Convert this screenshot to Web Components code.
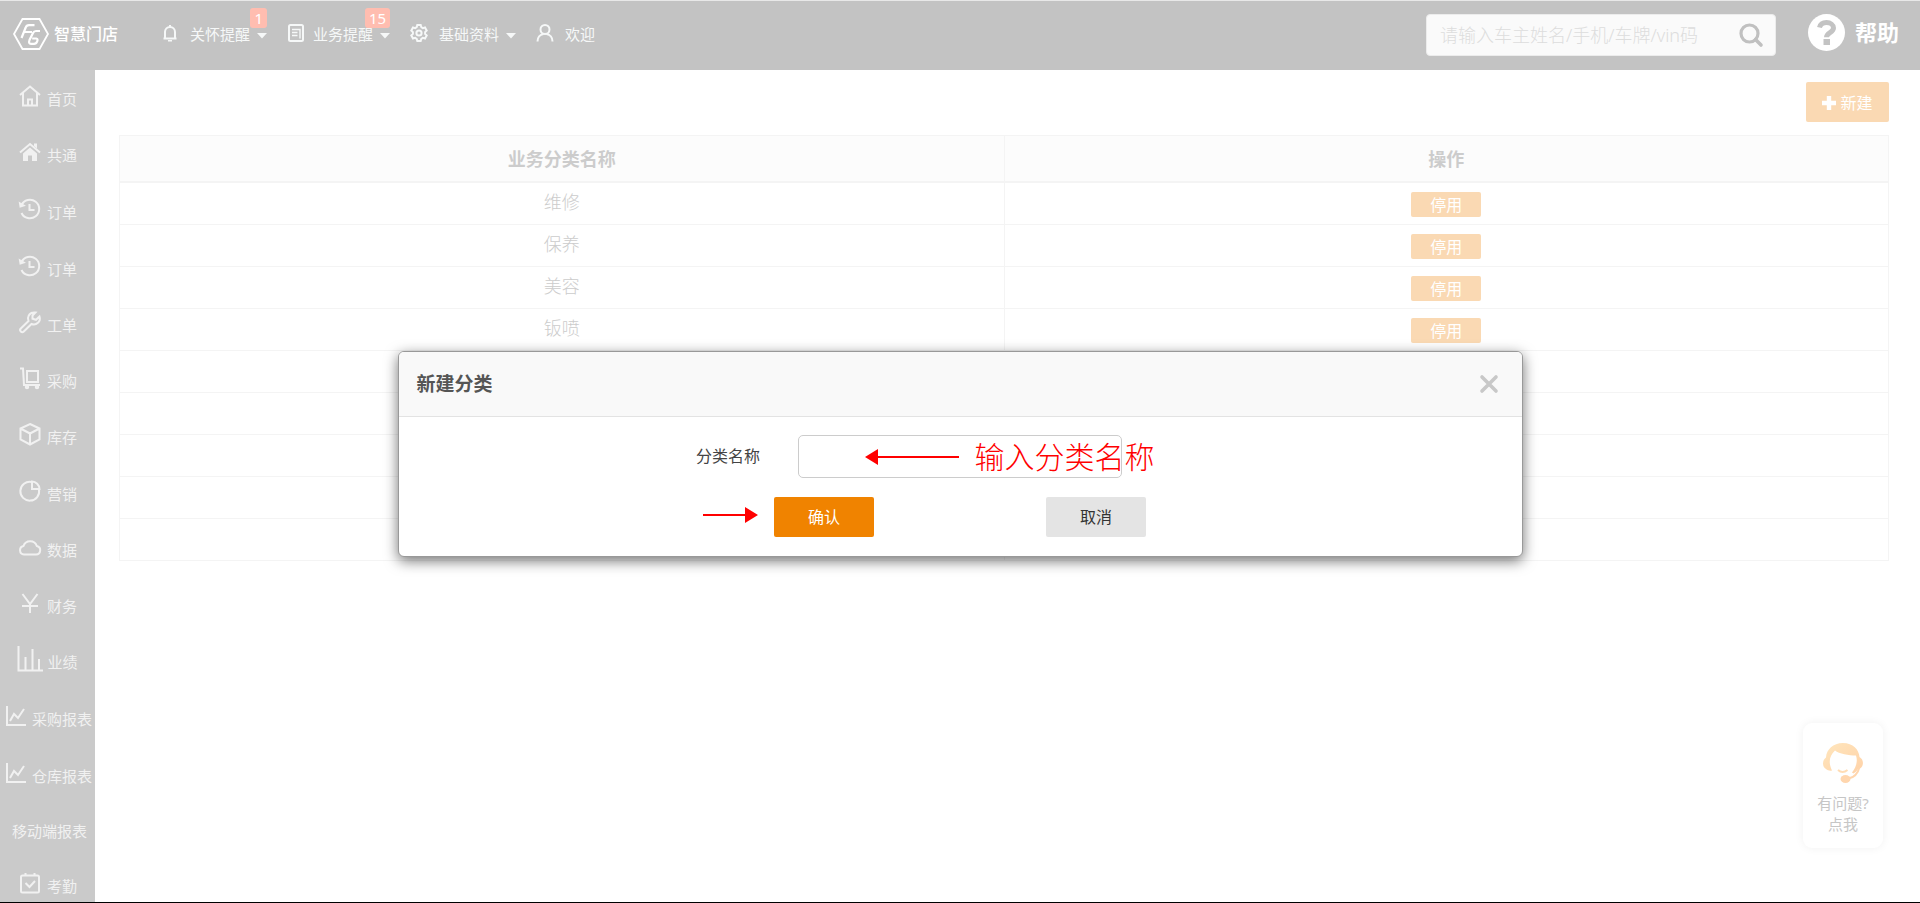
<!DOCTYPE html>
<html lang="zh-CN">
<head>
<meta charset="utf-8">
<title>智慧门店</title>
<style>
  html, body { margin: 0; height: 100%; }
  body {
    background: #fff;
    color: #ccc;
    font-family: "Noto Sans", "Noto Sans CJK SC", sans-serif;
    font-size: 16px;
  }
</style>
</head>
<body>
<store-app></store-app>
<script>
const ICONS = {
  home: ['0 0 22 22', '<path d="M1 10 11 1.500 21 10M4 8v12.500h14V8M9 20v-5.500h4V20"/>'],
  house: ['0 0 22 22', '<path d="M1 11.500 11 3l10 8.500" stroke-width="2"/><path d="M4 12.500 11 6.500l7 6V20h-5v-5.500H9V20H4z" fill="currentColor" stroke="none"/><path d="M15 2.500h3v5l-3-2.500z" fill="currentColor" stroke="none"/>'],
  history: ['0 0 22 22', '<path d="M2.500 7A9.300 9.300 0 1 1 2.500 15M10.500 6v6h5"/><path d="M1 5.500l.5 3 3-1z" fill="currentColor"/>'],
  wrench: ['0 0 22 22', '<path d="M14.500 1.500a6 6 0 0 0-5 8.500L1.800 17.500a1.800 1.800 0 0 0 3 3L12.500 13a6 6 0 0 0 8-7.500l-3.500 3.300-3.500-1V4.500l3-3a6 6 0 0 0-2 0z"/>'],
  cart: ['0 0 22 22', '<path d="M1 1.500h3L5 18h16M8 4h11v11H8z"/><circle cx="8" cy="20" r="1.200"/><circle cx="18" cy="20" r="1.200"/>'],
  box: ['0 0 22 22', '<path d="M11 1l9.500 4.500v11L11 21.500 1.500 16.500v-11zM1.500 5.500 11 10.500l9.500-5M11 10.500v11"/>'],
  pie: ['0 0 22 22', '<path d="M12.500 2A9.400 9.400 0 1 0 20 9.500"/><path d="M13 1.500V9h7.500A8 8 0 0 0 13 1.500z"/>'],
  cloud: ['0 0 22 22', '<path d="M5 18.500h12a4.300 4.300 0 0 0 .8-8.500 7 7 0 0 0-13.300 0A4.300 4.300 0 0 0 5 18.500z"/>'],
  yen: ['0 0 22 22', '<path d="M3.500 2 11 12l7.500-10M3 14h16M11 12v9"/>'],
  bars: ['0 0 26 26', '<path d="M1.500 0v24.500H26M8.500 24V11M15.500 24V3M22 24V13"/>'],
  trend: ['0 0 20 22', '<path d="M1 1v19h19M4 16l4-7 4 4 6-9"/>'],
  check: ['0 0 22 22', '<rect x="2" y="3.500" width="18" height="17" rx="1.500"/><path d="M6.500 1v3M15.500 1v3M6.500 11l4 4 5.500-6"/>'],
  bell: ['0 0 18 18', '<path d="M4 14.500V8a5 5 0 0 1 10 0v6.500M2.500 14.500h13M9 1v2"/><path d="M7 16h4v1.500H7z" fill="currentColor" stroke="none"/>'],
  doc: ['0 0 18 18', '<rect x="2" y="1" width="14" height="16" rx="1.500"/><path d="M5 5.500h8v9M5 8.500h5.500M5 11.500h5.500" stroke-width="1.400"/>'],
  gear: ['0 0 18 18', '<path d="M7.300 1h3.400l.6 2.200 1.500.9 2.200-.6 1.700 3-1.600 1.600v1.800l1.600 1.600-1.700 3-2.200-.6-1.500.9-.6 2.200H7.300l-.6-2.200-1.500-.9-2.200.6-1.700-3L2.900 9.900V8.100L1.300 6.500l1.700-3 2.200.6 1.500-.9z"/><circle cx="9" cy="9" r="2.600"/>'],
  user: ['0 0 18 18', '<circle cx="9" cy="5.500" r="4.500"/><path d="M1.500 17.500c0-4 2.500-7 6-7.500M16.500 17.500c0-4-2.500-7-6-7.500"/>'],
  caret: ['0 0 10 6', '<path d="M0 0h10L5 5.500z" fill="currentColor" stroke="none"/>'],
  search: ['0 0 24 24', '<circle cx="10.500" cy="10.500" r="8.500" stroke-width="3.200"/><path d="M16.500 16.500l5.500 5.500" stroke-width="3.600" stroke-linecap="round"/>'],
  help: ['0 0 37 37', '<circle cx="18.500" cy="18.500" r="18.500" fill="currentColor" stroke="none"/><path d="M11.500 13.500c1-4 4-5 7-5 4 0 7 2.400 7 5.500 0 4.700-7 4.500-7 9.200" stroke="#c3c3c3" stroke-width="5"/><path d="M15.500 25h6.500v6h-6.500z" fill="#c3c3c3" stroke="none"/>'],
  plus: ['0 0 14 14', '<path d="M7 0v14M0 7h14" stroke-width="4.400"/>'],
  close: ['0 0 18 18', '<path d="M2 2l14 14M16 2 2 16" stroke-width="3.600" stroke-linecap="round"/>'],
  logo: ['0 0 36 32', '<path d="M9.500 1h17L35 16l-8.500 15h-17L1 16z" stroke-width="1.800"/><path d="M8.500 20l4.200-10.500q.8-2.300 3.300-2.300h5.500M11 14h8" stroke-width="2.200"/><path d="M27 13h-4q-2 0-3 2l-3.500 7q-1.300 3.800 1.500 3.800h3q2.200 0 3.200-2.500t-1-2.800h-4" stroke-width="2.200"/>'],
  agent: ['0 0 40 40', '<defs><linearGradient id="g" x1="0" y1="0" x2="1" y2="1"><stop offset="0" stop-color="#ffe6bd"/><stop offset="1" stop-color="#ffd2a8"/></linearGradient></defs><path d="M20 0C10 0 3.500 6.500 3 14.500-1 17-1 24 3 26c1.500 1.500 4 2 6 1.500-4-8-2.500-15 3-20C16 11 26 12.500 33 12.500c2 6 0 12-4 17l1.500 1c2-1.200 3.500-2.700 4.500-4.500l2-.5c4-2.500 4-9-.5-11.500C36 6.500 30 0 20 0z" stroke="none" fill="url(#g)"/><path d="M36.500 24c-1.500 6-5 10.500-11 11.500" stroke="#ffd6ae" stroke-width="2"/><ellipse cx="22.500" cy="36" rx="5" ry="4" fill="#ffd6ae" stroke="none"/><path d="M15 27q4.500 4 9.500 0" stroke="#ffdcb4" stroke-width="2"/>']
};

const define = (name, html, setup) => {
  const template = document.createElement('template');
  template.innerHTML = html;
  customElements.define(name, class extends HTMLElement {
    constructor() {
      super();
      this.attachShadow({ mode: 'open' }).append(template.content.cloneNode(true));
    }
    connectedCallback() { if (setup) setup(this, this.shadowRoot); }
  });
};

const makeIcon = name => {
  const icon = document.createElement('ui-icon');
  icon.setAttribute('name', name);
  return icon;
};

define('ui-icon', `
  <style>
    :host { display: block; flex: none; width: var(--w, 18px); height: var(--h, var(--w, 18px)); }
    svg { display: block; width: 100%; height: 100%; fill: none; stroke: currentColor; stroke-width: 2; overflow: visible; }
  </style>
  <svg aria-hidden="true"></svg>`, (el, root) => {
  const [box, shapes] = ICONS[el.getAttribute('name')];
  const svg = root.querySelector('svg');
  svg.setAttribute('viewBox', box);
  svg.innerHTML = shapes;
});

define('top-item', `
  <style>
    :host { display: block; position: relative; }
    a { display: flex; align-items: center; color: #f6f8f8; text-decoration: none; font-size: 15px; line-height: 20px; }
    .text { margin-left: 11px; }
    :host([icon="doc"]) .text { margin-left: 8px; }
    ui-icon { margin-bottom: 2px; }
    .caret { --w: 10px; --h: 6px; margin: 4px 0 0 7px; }
    .badge { position: absolute; right: 0; top: -16px; box-sizing: border-box; min-width: 16px; padding: 0 4px; border-radius: 3px; background: #ffbdb0; color: #fff; font-size: 15px; line-height: 20px; text-align: center; }
    [hidden] { display: none; }
  </style>
  <a href="#"><span class="text"><slot></slot></span><ui-icon class="caret" name="caret"></ui-icon></a>
  <span class="badge"></span>`, (el, root) => {
  root.querySelector('a').prepend(makeIcon(el.getAttribute('icon')));
  root.querySelector('.caret').hidden = !el.hasAttribute('menu');
  const badge = root.querySelector('.badge');
  badge.textContent = el.getAttribute('count') || '';
  badge.hidden = !el.hasAttribute('count');
});

define('top-bar', `
  <style>
    :host { display: flex; align-items: flex-start; box-sizing: border-box; height: 70px; flex: none; border-top: 1px solid #e8e8e8; background: #c3c3c3; color: #fff; }
    .brand { display: flex; align-items: center; gap: 5px; margin: 17px 0 0 13px; color: #fff; text-decoration: none; font-size: 16px; line-height: 32px; font-weight: 500; }
    .brand ui-icon { --w: 36px; --h: 32px; }
    nav { display: flex; gap: 20px; margin: 23px 0 0 43px; }
    form { display: flex; align-items: center; box-sizing: border-box; width: 350px; height: 42px; margin: 13px 32px 0 auto; padding: 0 12px 0 13px; border: 1px solid #ececec; border-radius: 4px; background: #fafafa; }
    input { flex: 1; min-width: 0; padding: 0; border: 0; outline: 0; background: none; font: inherit; font-size: 18px; font-weight: 300; color: #999; }
    input::placeholder { color: #ddd; opacity: 1; }
    button { padding: 0; border: 0; background: none; color: #c0c0c0; }
    button ui-icon { --w: 24px; }
    .help { display: flex; align-items: center; gap: 10px; margin: 13px 21px 0 0; color: #fff; text-decoration: none; font-size: 22px; line-height: 37px; font-weight: 700; }
    .help ui-icon { --w: 37px; }
  </style>
  <a class="brand" href="#"><ui-icon name="logo"></ui-icon>智慧门店</a>
  <nav>
    <top-item icon="bell" menu count="1">关怀提醒</top-item>
    <top-item icon="doc" menu count="15">业务提醒</top-item>
    <top-item icon="gear" menu>基础资料</top-item>
    <top-item icon="user">欢迎</top-item>
  </nav>
  <form>
    <input type="text" aria-label="搜索" placeholder="请输入车主姓名/手机/车牌/vin码">
    <button type="button" aria-label="搜索"><ui-icon name="search"></ui-icon></button>
  </form>
  <a class="help" href="#"><ui-icon name="help"></ui-icon>帮助</a>`);

define('side-item', `
  <style>
    :host { display: block; flex: none; }
    a { display: flex; align-items: center; justify-content: center; gap: 6px; height: 56px; padding-left: 1px; color: #f1f1f1; text-decoration: none; font-size: 15px; line-height: 20px; white-space: nowrap; }
    :host([icon="history"]) a, :host([icon="pie"]) a, :host([icon="trend"]) a { height: 57px; }
    ui-icon { --w: 22px; margin-bottom: 6px; }
    :host([icon="bars"]) ui-icon { --w: 26px; }
    :host([icon="bars"]) a { gap: 4px; padding-left: 0; }
    :host([icon="trend"]) ui-icon { --w: 20px; --h: 22px; }
    :host([icon="trend"]) a { padding-left: 3px; }
    :host(:not([icon])) a { height: 54px; padding-left: 4px; }
  </style>
  <a href="#"><slot></slot></a>`, (el, root) => {
  if (el.hasAttribute('icon')) root.querySelector('a').prepend(makeIcon(el.getAttribute('icon')));
});

define('side-bar', `
  <style>
    :host { display: flex; flex-direction: column; box-sizing: border-box; width: 95px; flex: none; padding-top: 1px; overflow: hidden; background: #cacaca; }
  </style>
  <side-item icon="home">首页</side-item>
  <side-item icon="house">共通</side-item>
  <side-item icon="history">订单</side-item>
  <side-item icon="history">订单</side-item>
  <side-item icon="wrench">工单</side-item>
  <side-item icon="cart">采购</side-item>
  <side-item icon="box">库存</side-item>
  <side-item icon="pie">营销</side-item>
  <side-item icon="cloud">数据</side-item>
  <side-item icon="yen">财务</side-item>
  <side-item icon="bars">业绩</side-item>
  <side-item icon="trend">采购报表</side-item>
  <side-item icon="trend">仓库报表</side-item>
  <side-item>移动端报表</side-item>
  <side-item icon="check">考勤</side-item>`);

define('category-table', `
  <style>
    :host { display: block; }
    table { width: 100%; table-layout: fixed; border-collapse: separate; border-spacing: 0; border: solid #f4f4f4; border-width: 1px 0 0 1px; font-size: 18px; text-align: center; color: #ccc; }
    th, td { box-sizing: border-box; padding: 0; border: solid #f4f4f4; border-width: 0 1px 1px 0; line-height: 24px; }
    th { height: 47px; border-bottom-width: 2px; background: #fcfcfc; }
    td { height: 42px; padding-top: 2px; font-weight: 300; }
    .name { padding: 0 0 3px; }
    button { display: block; width: 70px; height: 25px; margin: 0 auto; padding: 2px 0 0; border: 0; border-radius: 2px; background: #fad9b3; color: #fff; font: inherit; font-weight: 400; font-size: 16px; line-height: 23px; }
  </style>
  <table>
    <thead><tr><th>业务分类名称</th><th>操作</th></tr></thead>
    <tbody></tbody>
  </table>`, (el, root) => {
  const body = root.querySelector('tbody');
  const names = ['维修', '保养', '美容', '钣喷', '', '', '', '', ''];
  body.innerHTML = names.map(name =>
    `<tr><td class="name">${name}</td><td>${name && '<button type="button">停用</button>'}</td></tr>`).join('');
});

define('support-card', `
  <style>
    :host { display: block; position: absolute; right: 37px; bottom: 54px; }
    a { display: flex; flex-direction: column; align-items: center; box-sizing: border-box; width: 80px; height: 125px; padding-top: 20px; border-radius: 9px; background: #fff; box-shadow: 0 0 10px rgba(0, 0, 0, .06); color: #c6c6c6; text-decoration: none; font-size: 15px; line-height: 21px; text-align: center; }
    ui-icon { --w: 40px; margin-bottom: 10px; }
  </style>
  <a href="#"><ui-icon name="agent"></ui-icon><span>有问题?</span><span>点我</span></a>`);

define('category-dialog', `
  <style>
    :host { display: block; position: absolute; top: 351px; left: 0; right: 0; margin: 0 auto; box-sizing: border-box; width: 1125px; max-width: 100%; border: 1px solid #999; border-radius: 6px; background: #fff; box-shadow: 0 4px 14px rgba(0, 0, 0, .55); color: #444; }
    header { display: flex; align-items: center; justify-content: space-between; box-sizing: border-box; height: 65px; padding: 0 24px 0 18px; border-bottom: 1px solid #e3e3e3; border-radius: 5px 5px 0 0; background: #f9f9f9; }
    h2 { margin: 0; color: #555; font-size: 19px; line-height: 28px; }
    .close { padding: 0; border: 0; background: none; color: #c8c8c8; }
    .field { display: grid; grid-template-columns: 1fr 324px 1fr; align-items: center; padding-top: 18px; }
    label { padding: 0 38px 2px 0; text-align: right; line-height: 24px; }
    input { box-sizing: border-box; width: 100%; height: 43px; padding: 0 12px; border: 1px solid #ccc; border-radius: 5px; outline: 0; background: #fff; font: inherit; }
    .actions { display: flex; justify-content: center; gap: 172px; padding: 19px 0; }
    .actions button { width: 100px; height: 40px; padding: 0; border: 0; border-radius: 2px; background: #e4e4e4; color: #333; font: inherit; line-height: 24px; }
    .actions .ok { background: #f08300; color: #fff; }
    .note { position: absolute; top: 82px; left: 466px; display: flex; align-items: center; gap: 16px; color: #f00; font-size: 30px; font-weight: 300; line-height: 45px; white-space: nowrap; }
    .pointer { position: absolute; top: 155px; left: 304px; }
    svg { display: block; fill: #f00; }
  </style>
  <header>
    <h2>新建分类</h2>
    <button class="close" type="button" aria-label="关闭"><ui-icon name="close"></ui-icon></button>
  </header>
  <div class="field"><label for="name">分类名称</label><input id="name" type="text"></div>
  <div class="actions"><button class="ok" type="button">确认</button><button type="button">取消</button></div>
  <div class="note">
    <svg width="94" height="16" aria-hidden="true"><path d="M0 8 13 0v7h81v2H13v7z"/></svg>
    <span>输入分类名称</span>
  </div>
  <svg class="pointer" width="55" height="16" aria-hidden="true"><path d="M55 8 42 0v7H0v2h42v7z"/></svg>`);

define('store-app', `
  <style>
    :host { display: flex; flex-direction: column; position: relative; box-sizing: border-box; height: 100vh; overflow: hidden; border-bottom: 1px solid #000; background: #fff; }
    .body { display: flex; flex: 1; min-height: 0; }
    main { flex: 1; min-width: 0; padding: 12px 31px 0 24px; }
    .tools { display: flex; justify-content: flex-end; padding-bottom: 13px; }
    .tools button { display: flex; align-items: center; justify-content: center; gap: 4px; width: 83px; height: 40px; padding: 2px 0 0; border: 0; border-radius: 2px; background: #fad9b3; color: #fff; font: inherit; line-height: 24px; }
    .tools ui-icon { --w: 14px; }
  </style>
  <top-bar></top-bar>
  <div class="body">
    <side-bar></side-bar>
    <main>
      <div class="tools"><button type="button"><ui-icon name="plus"></ui-icon>新建</button></div>
      <category-table></category-table>
    </main>
  </div>
  <support-card></support-card>
  <category-dialog role="dialog" aria-label="新建分类"></category-dialog>`);
</script>
</body>
</html>
